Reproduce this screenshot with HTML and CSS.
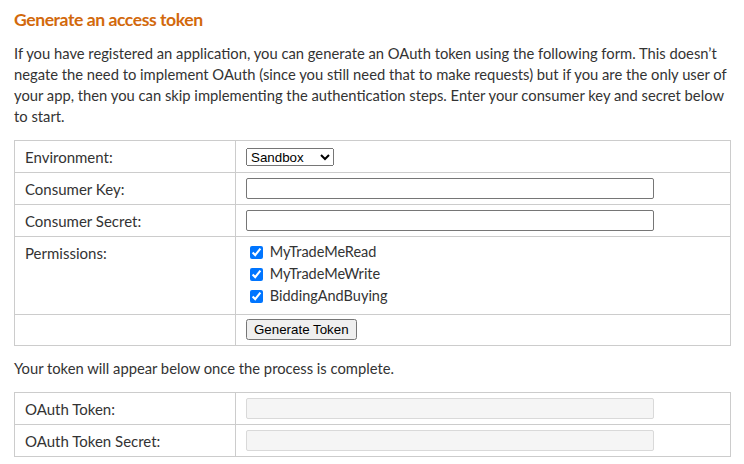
FILE: index.html
```html
<!DOCTYPE html>
<html lang="en">
<head>
<meta charset="utf-8">
<title>Generate an access token</title>
<link rel="stylesheet" href="styles.css">
</head>
<body>
<main class="page">
  <h2 class="title">Generate an access token</h2>
  <p class="intro">If you have registered an application, you can generate an OAuth token using the following form. This doesn’t negate the need to implement OAuth (since you still need that to make requests) but if you are the only user of your app, then you can skip implementing the authentication steps. Enter your consumer key and secret below to start.</p>

  <table class="form-table">
    <tr class="row">
      <td class="label">Environment:</td>
      <td class="field">
        <select class="select">
          <option>Sandbox</option>
          <option>Production</option>
        </select>
      </td>
    </tr>
    <tr class="row">
      <td class="label">Consumer Key:</td>
      <td class="field"><input class="text" type="text"></td>
    </tr>
    <tr class="row">
      <td class="label">Consumer Secret:</td>
      <td class="field"><input class="text" type="text"></td>
    </tr>
    <tr class="row">
      <td class="label">Permissions:</td>
      <td class="field perms">
        <label class="perm"><input type="checkbox" checked> MyTradeMeRead</label>
        <label class="perm"><input type="checkbox" checked> MyTradeMeWrite</label>
        <label class="perm"><input type="checkbox" checked> BiddingAndBuying</label>
      </td>
    </tr>
    <tr class="row row-action">
      <td class="label"></td>
      <td class="field"><button class="btn" type="button">Generate Token</button></td>
    </tr>
  </table>

  <p class="note">Your token will appear below once the process is complete.</p>

  <table class="form-table">
    <tr class="row">
      <td class="label">OAuth Token:</td>
      <td class="field"><input class="text" type="text" disabled></td>
    </tr>
    <tr class="row">
      <td class="label">OAuth Token Secret:</td>
      <td class="field"><input class="text" type="text" disabled></td>
    </tr>
  </table>
</main>
</body>
</html>
```

FILE: styles.css
```css
html, body {
  margin: 0;
  padding: 0;
  background: #fff;
}

body {
  font-family: Lato, "Open Sans", "Noto Sans", sans-serif;
  color: #333;
}

.page {
  padding: 0 13px 0 14px;
}

.title {
  margin: 0;
  padding-top: 8px;
  font-size: 17.6px;
  line-height: 24px;
  font-weight: 700;
  letter-spacing: -0.45px;
  color: #d2690c;
}

.intro {
  margin: 11px 0 0;
  font-size: 14.75px;
  line-height: 21px;
}

.note {
  margin: 12px 0 0;
  font-size: 14.75px;
  line-height: 21px;
}

.form-table {
  width: 100%;
  border-collapse: collapse;
  border: 1px solid #ccc;
  margin-top: 13px;
  font-size: 15px;
}

.form-table + .note + .form-table {
  margin-top: 13px;
}

.form-table td {
  border: 1px solid #ccc;
  padding: 6px 10px 5px;
  vertical-align: top;
  line-height: 20px;
}

.form-table .row-action td {
  padding-bottom: 4px;
}

.label {
  width: 200px;
}

.select {
  width: 88px;
  height: 18px;
  font: 13.33px "Liberation Sans", Arial, sans-serif;
  margin: 1px 0 0;
  vertical-align: top;
}

.text {
  box-sizing: border-box;
  width: 408px;
  height: 21px;
  margin: -1px 0 0;
  font: 13.33px "Liberation Sans", Arial, sans-serif;
  border: 1px solid #767676;
  border-radius: 2px;
  vertical-align: top;
}

.text:disabled {
  background: #f5f5f5;
  border-color: #d9d9d9;
}

.form-table td.perms {
  padding-top: 4px;
  padding-bottom: 7px;
  font-size: 14.5px;
}

.perm {
  display: block;
  line-height: 22px;
}

.perm input {
  vertical-align: -2px;
}

.btn {
  font: 13.33px "Liberation Sans", Arial, sans-serif;
  height: 21px;
  padding: 1px 6px;
  margin-top: -2px;
  vertical-align: top;
}
```
